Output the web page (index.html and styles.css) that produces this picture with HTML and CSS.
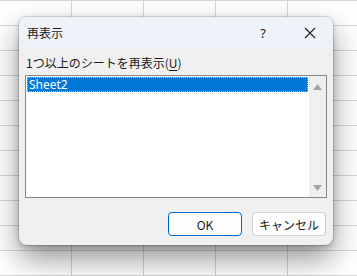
FILE: index.html
```html
<!DOCTYPE html>
<html lang="ja">
<head>
    <meta charset="UTF-8">
    <title>再表示</title>
    <link rel="stylesheet" href="styles.css">
</head>
<body>
    <div class="dialog">
        <div class="titlebar">
            <div class="title">再表示</div>
            <div class="help">?</div>
            <div class="close">
                <svg width="12" height="12" viewBox="0 0 12 12"><path d="M1 1L11 11M11 1L1 11" stroke="#222" stroke-width="1.1" fill="none"/></svg>
            </div>
        </div>
        <div class="content">
            <div class="label">1つ以上のシートを再表示(<u>U</u>)</div>
            <div class="listbox">
                <div class="items">
                    <div class="item selected">Sheet2</div>
                </div>
                <div class="scrollbar">
                    <svg width="9" height="6" viewBox="0 0 9 6"><path d="M0 6L4.5 0L9 6Z" fill="#a3a3a3"/></svg>
                    <svg width="9" height="6" viewBox="0 0 9 6"><path d="M0 0L4.5 6L9 0Z" fill="#a3a3a3"/></svg>
                </div>
            </div>
            <div class="buttons">
                <button class="btn primary">OK</button>
                <button class="btn">キャンセル</button>
            </div>
        </div>
    </div>
</body>
</html>
```

FILE: styles.css
```css
body {
    margin: 0;
    padding: 17px 0 0 19px;
    height: 276px;
    box-sizing: border-box;
    font-family: "Noto Sans CJK JP", "Noto Sans", sans-serif;
    font-size: 12px;
    color: #1a1a1a;
    background-color: #fff;
    background-image:
        linear-gradient(to right, #d6d6d6 1px, transparent 1px),
        linear-gradient(to bottom, #d6d6d6 1px, transparent 1px);
    background-size: 72px 25px;
    background-position: 71px 0, 0 0;
    overflow: hidden;
}
.dialog {
    width: 314px;
    height: 228px;
    border-radius: 8px;
    background-color: #f0f0f0;
    box-shadow: 0 14px 30px rgba(0, 0, 0, 0.42), 0 2px 6px rgba(0, 0, 0, 0.2), 0 0 0 1px rgba(0, 0, 0, 0.12);
    overflow: hidden;
    display: flex;
    flex-direction: column;
}
.titlebar {
    height: 31px;
    background-color: #eef2f9;
    display: flex;
    align-items: center;
    padding-left: 8px;
}
.title {
    flex: 1;
    font-size: 12px;
}
.help {
    width: 46px;
    text-align: center;
    font-family: "Noto Sans", sans-serif;
    font-size: 13px;
    margin-right: 1px;
}
.close {
    width: 46px;
    display: flex;
    justify-content: center;
}
.content {
    padding: 7px 6px 0 6px;
    display: flex;
    flex-direction: column;
}
.label {
    line-height: 16px;
    margin-left: 1px;
    margin-bottom: 4px;
}
.label u {
    text-underline-offset: 2px;
}
.listbox {
    height: 123px;
    border: 1px solid #868686;
    background-color: #fff;
    display: flex;
    box-sizing: border-box;
}
.items {
    flex: 1;
    padding: 1px 1px 0 1px;
}
.item {
    height: 15px;
    line-height: 15px;
    padding-left: 2px;
    font-family: "Noto Sans", sans-serif;
    font-size: 12px;
}
.item.selected {
    background-color: #0078d7;
    color: #fff;
    outline: 1px dotted #9cc9ee;
    outline-offset: -1px;
}
.scrollbar {
    width: 17px;
    background-color: #efefef;
    display: flex;
    flex-direction: column;
    justify-content: space-between;
    align-items: center;
    padding: 8px 0 6px 0;
}
.buttons {
    display: flex;
    justify-content: flex-end;
    gap: 10px;
    margin-top: 14px;
    margin-right: 1px;
}
.btn {
    width: 74px;
    height: 24px;
    border: 1px solid #d0d0d0;
    border-radius: 4px;
    background-color: #fdfdfd;
    font-family: "Noto Sans CJK JP", "Noto Sans", sans-serif;
    font-size: 12px;
    color: #1a1a1a;
    padding: 0;
}
.btn.primary {
    border: 1px solid #0067c0;
    box-shadow: inset 0 0 0 1px #fdfdfd;
}
```
